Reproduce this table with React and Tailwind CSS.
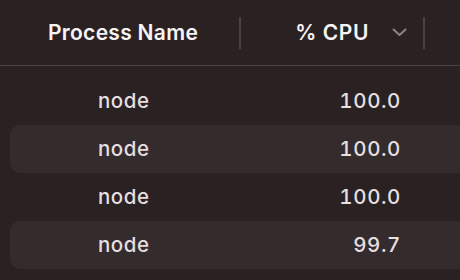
const rows = [
  { name: "node", cpu: "100.0" },
  { name: "node", cpu: "100.0" },
  { name: "node", cpu: "100.0" },
  { name: "node", cpu: "99.7" },
];

export default function App() {
  return (
    <div
      className="w-[460px] h-[280px] overflow-hidden bg-[#2a2123] text-[#e4dfe0]"
      style={{ fontFamily: "Inter, 'Noto Sans', sans-serif" }}
    >
      {/* header */}
      <div className="flex items-center h-[66px] border-b border-[#4a4144]">
        <div className="w-[239px] pl-[48px] text-[21px] tracking-[0.3px] font-semibold text-[#f7f4f5]">
          Process Name
        </div>
        <div className="w-[2px] h-[32px] bg-[#4a4144]" />
        <div className="w-[182px] flex items-center justify-end pr-[16px]">
          <span className="text-[21px] tracking-[0.6px] font-semibold text-[#f7f4f5]">% CPU</span>
          <svg
            className="ml-[23px]"
            width="15"
            height="9"
            viewBox="0 0 15 9"
            fill="none"
            stroke="#8c8486"
            strokeWidth="2"
            strokeLinecap="round"
            strokeLinejoin="round"
          >
            <path d="M1.5 1.5 L7.5 7 L13.5 1.5" />
          </svg>
        </div>
        <div className="w-[2px] h-[32px] bg-[#4a4144]" />
      </div>

      {/* rows */}
      <div className="pt-[11px]">
        {rows.map((r, i) => (
          <div
            key={i}
            className={`flex items-center h-[48px] ml-[10px] w-[470px] pl-[88px] rounded-[10px] text-[20.5px] font-medium ${
              i % 2 === 1 ? "bg-[#342b2d]" : ""
            }`}
          >
            <span className="w-[203px] tracking-[0.5px]">{r.name}</span>
            <span className="w-[100px] text-right tabular-nums tracking-[0.6px]">{r.cpu}</span>
          </div>
        ))}
      </div>
    </div>
  );
}
